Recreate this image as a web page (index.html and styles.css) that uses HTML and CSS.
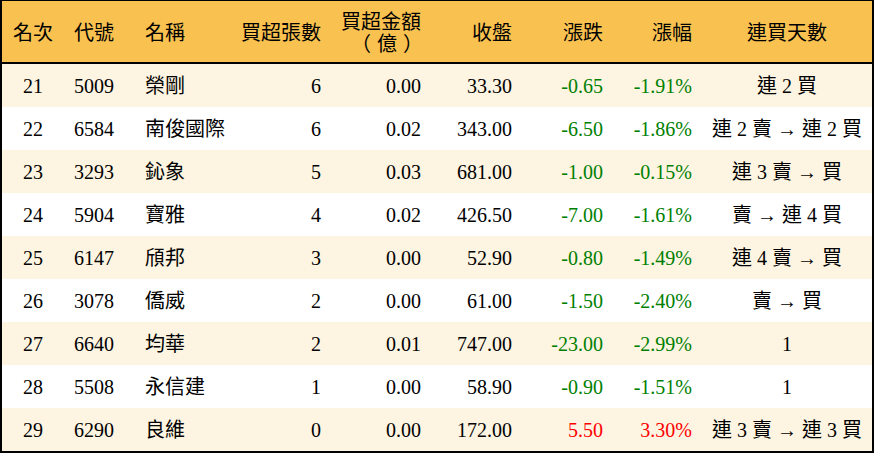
FILE: index.html
```html
<!DOCTYPE html>
<html lang="zh-Hant">
<head>
<meta charset="utf-8">
<title>買超排行</title>
<link rel="stylesheet" href="styles.css">
</head>
<body>
<table class="rank">
  <colgroup>
    <col class="c-rank"><col class="c-code"><col class="c-name"><col class="c-lots"><col class="c-amt"><col class="c-close"><col class="c-chg"><col class="c-pct"><col class="c-days">
  </colgroup>
  <thead>
    <tr>
      <th class="ctr">名次</th>
      <th class="lft">代號</th>
      <th class="lft">名稱</th>
      <th class="rgt">買超張數</th>
      <th class="rgt amt-h">買超金額<br><span class="sub">（億）</span></th>
      <th class="rgt">收盤</th>
      <th class="rgt">漲跌</th>
      <th class="rgt">漲幅</th>
      <th class="ctr">連買天數</th>
    </tr>
  </thead>
  <tbody>
    <tr><td class="ctr">21</td><td class="lft">5009</td><td class="lft">榮剛</td><td class="rgt">6</td><td class="rgt">0.00</td><td class="rgt">33.30</td><td class="rgt dn">-0.65</td><td class="rgt dn">-1.91%</td><td class="ctr">連 2 買</td></tr>
    <tr><td class="ctr">22</td><td class="lft">6584</td><td class="lft">南俊國際</td><td class="rgt">6</td><td class="rgt">0.02</td><td class="rgt">343.00</td><td class="rgt dn">-6.50</td><td class="rgt dn">-1.86%</td><td class="ctr">連 2 賣 → 連 2 買</td></tr>
    <tr><td class="ctr">23</td><td class="lft">3293</td><td class="lft">鈊象</td><td class="rgt">5</td><td class="rgt">0.03</td><td class="rgt">681.00</td><td class="rgt dn">-1.00</td><td class="rgt dn">-0.15%</td><td class="ctr">連 3 賣 → 買</td></tr>
    <tr><td class="ctr">24</td><td class="lft">5904</td><td class="lft">寶雅</td><td class="rgt">4</td><td class="rgt">0.02</td><td class="rgt">426.50</td><td class="rgt dn">-7.00</td><td class="rgt dn">-1.61%</td><td class="ctr">賣 → 連 4 買</td></tr>
    <tr><td class="ctr">25</td><td class="lft">6147</td><td class="lft">頎邦</td><td class="rgt">3</td><td class="rgt">0.00</td><td class="rgt">52.90</td><td class="rgt dn">-0.80</td><td class="rgt dn">-1.49%</td><td class="ctr">連 4 賣 → 買</td></tr>
    <tr><td class="ctr">26</td><td class="lft">3078</td><td class="lft">僑威</td><td class="rgt">2</td><td class="rgt">0.00</td><td class="rgt">61.00</td><td class="rgt dn">-1.50</td><td class="rgt dn">-2.40%</td><td class="ctr">賣 → 買</td></tr>
    <tr><td class="ctr">27</td><td class="lft">6640</td><td class="lft">均華</td><td class="rgt">2</td><td class="rgt">0.01</td><td class="rgt">747.00</td><td class="rgt dn">-23.00</td><td class="rgt dn">-2.99%</td><td class="ctr">1</td></tr>
    <tr><td class="ctr">28</td><td class="lft">5508</td><td class="lft">永信建</td><td class="rgt">1</td><td class="rgt">0.00</td><td class="rgt">58.90</td><td class="rgt dn">-0.90</td><td class="rgt dn">-1.51%</td><td class="ctr">1</td></tr>
    <tr><td class="ctr">29</td><td class="lft">6290</td><td class="lft">良維</td><td class="rgt">0</td><td class="rgt">0.00</td><td class="rgt">172.00</td><td class="rgt up">5.50</td><td class="rgt up">3.30%</td><td class="ctr">連 3 賣 → 連 3 買</td></tr>
  </tbody>
</table>
</body>
</html>
```
FILE: styles.css
```css
html, body {
  margin: 0;
  padding: 0;
  background: #ffffff;
}

.rank {
  width: 874px;
  border-collapse: separate;
  border-spacing: 0;
  table-layout: fixed;
  border-top: 1px solid #000;
  border-left: 2px solid #000;
  border-right: 2px solid #000;
  border-bottom: 2px solid #000;
  font-family: "Liberation Serif", "Noto Sans CJK TC", serif;
  font-size: 20px;
  color: #000;
}

.c-rank { width: 62px; }
.c-code { width: 71px; }
.c-name { width: 96px; }
.c-lots { width: 100px; }
.c-amt { width: 100px; }
.c-close { width: 91px; }
.c-chg { width: 91px; }
.c-pct { width: 89px; }
.c-days { width: 170px; }

.rank th {
  background: #f9c250;
  height: 63px;
  padding: 2px 10px 0;
  font-weight: normal;
  line-height: 22px;
  border-bottom: 2px solid #000;
  box-sizing: border-box;
  vertical-align: middle;
  white-space: nowrap;
}

.amt-h .sub {
  display: inline-block;
  width: 76px;
  box-sizing: border-box;
  padding-left: 6px;
  text-align: center;
  letter-spacing: 6px;
}

.rank td {
  height: 43px;
  padding: 0 10px;
  box-sizing: border-box;
  vertical-align: middle;
  white-space: nowrap;
  line-height: 22px;
}

.rank tbody tr:nth-child(odd) td {
  background: #fdf4e1;
}

.ctr { text-align: center; }
.lft { text-align: left; }
.rgt { text-align: right; }

.dn { color: #008000; }
.up { color: #ff0000; }
```
